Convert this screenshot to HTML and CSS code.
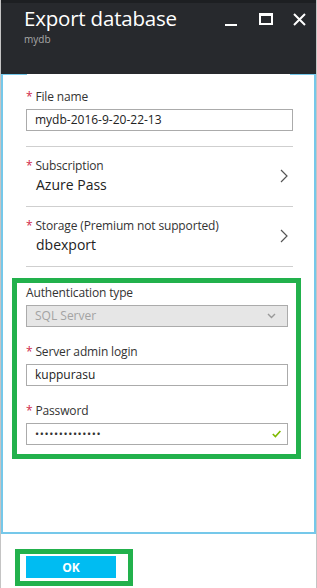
FILE: index.html
```html
<!DOCTYPE html>
<html lang="en">
<head>
  <meta charset="UTF-8">
  <meta name="viewport" content="width=device-width, initial-scale=1.0">
  <title>Export database</title>
  <link rel="stylesheet" href="styles.css">
</head>
<body>
  <div class="blade">
    <header class="blade-header">
      <div class="titles">
        <h1>Export database</h1>
        <p class="subtitle">mydb</p>
      </div>
      <div class="controls">
        <span class="ctl ctl-min"></span>
        <span class="ctl ctl-max"></span>
        <svg class="ctl-close" width="13" height="13" viewBox="0 0 13 13">
          <path d="M1 1 L12 12 M12 1 L1 12" stroke="#fff" stroke-width="2" fill="none"/>
        </svg>
      </div>
    </header>

    <main class="blade-content">
      <div class="field">
        <label><span class="req">*</span> File name</label>
        <div class="input">mydb-2016-9-20-22-13</div>
      </div>

      <div class="picker">
        <div>
          <label><span class="req">*</span> Subscription</label>
          <div class="value">Azure Pass</div>
        </div>
        <svg class="chev" width="8" height="14" viewBox="0 0 8 14">
          <path d="M1 1 L7 7 L1 13" stroke="#555" stroke-width="1.2" fill="none"/>
        </svg>
      </div>

      <div class="picker">
        <div>
          <label><span class="req">*</span> Storage (Premium not supported)</label>
          <div class="value">dbexport</div>
        </div>
        <svg class="chev" width="8" height="14" viewBox="0 0 8 14">
          <path d="M1 1 L7 7 L1 13" stroke="#555" stroke-width="1.2" fill="none"/>
        </svg>
      </div>

      <div class="highlight">
        <div class="field">
          <label>Authentication type</label>
          <div class="input select">
            <span>SQL Server</span>
            <svg width="9" height="6" viewBox="0 0 9 6">
              <path d="M1 1 L4.5 4.5 L8 1" stroke="#999" stroke-width="1.4" fill="none"/>
            </svg>
          </div>
        </div>
        <div class="field">
          <label><span class="req">*</span> Server admin login</label>
          <div class="input">kuppurasu</div>
        </div>
        <div class="field last">
          <label><span class="req">*</span> Password</label>
          <div class="input password">
            <span class="dots">&bull;&bull;&bull;&bull;&bull;&bull;&bull;&bull;&bull;&bull;&bull;&bull;&bull;&bull;</span>
            <svg width="9" height="8" viewBox="0 0 9 8">
              <path d="M0.8 4 L3.4 6.6 L8.4 1" stroke="#7fba00" stroke-width="1.6" fill="none"/>
            </svg>
          </div>
        </div>
      </div>
    </main>

    <footer class="blade-footer">
      <div class="ok-frame">
        <button class="ok">OK</button>
      </div>
    </footer>
  </div>
</body>
</html>
```

FILE: styles.css
```css
/* Reset */
html, body {
  margin: 0;
  padding: 0;
  background: #fff;
  font-family: 'Open Sans', 'Noto Sans', sans-serif;
  color: #333;
}

.blade {
  width: 317px;
  height: 588px;
  box-sizing: border-box;
  border-left: 1px solid #c4c4c4;
  border-right: 1px solid #c4c4c4;
  display: flex;
  flex-direction: column;
  overflow: hidden;
}

/* Header */
.blade-header {
  flex-shrink: 0;
  height: 74px;
  margin: 0 -1px;
  box-sizing: border-box;
  background: #27292d;
  border-top: 3px solid #1d1f22;
  display: flex;
  justify-content: space-between;
  padding: 0 11px 0 24px;
}

.titles h1 {
  margin: 2px 0 0;
  font-size: 20.5px;
  font-weight: 400;
  line-height: 26px;
  color: #fff;
  letter-spacing: -0.2px;
}

.subtitle {
  margin: 1px 0 0;
  font-size: 10px;
  line-height: 14px;
  color: #a8a8a8;
}

.controls {
  display: flex;
  align-items: flex-start;
  padding-top: 10px;
}

.ctl-min {
  width: 12px;
  height: 2px;
  background: #fff;
  margin-top: 11px;
}

.ctl-max {
  width: 10px;
  height: 7px;
  border: 2px solid #fff;
  border-top-width: 3px;
  margin-left: 22px;
}

.ctl-close {
  margin-left: 20px;
}

/* Content */
.blade-content {
  flex-shrink: 0;
  height: 460px;
  box-sizing: border-box;
  border: 2px solid #75c8ea;
  border-top: none;
  background:
    linear-gradient(#75c8ea, #75c8ea) left top / 24px 1px no-repeat,
    linear-gradient(#75c8ea, #75c8ea) right top / 24px 1px no-repeat,
    #fff;
  padding: 15px 21px 0 23px;
}

label {
  display: block;
  font-size: 12px;
  line-height: 16px;
  letter-spacing: -0.15px;
  color: #333;
}

.req {
  color: #d0284a;
}

.field {
  margin-bottom: 4px;
}

.field label {
  margin-bottom: 4px;
}

.input {
  height: 22px;
  box-sizing: border-box;
  border: 1px solid #ababab;
  padding: 0 8px;
  font-size: 12px;
  line-height: 20px;
  color: #222;
  display: flex;
  align-items: center;
  justify-content: space-between;
}

.blade-content > .field {
  border-bottom: 1px solid #cfcfcf;
  padding-bottom: 15px;
  margin-bottom: 0;
}

.picker {
  display: flex;
  justify-content: space-between;
  align-items: center;
  border-bottom: 1px solid #cfcfcf;
  padding: 11px 5px 12px 0;
}

.value {
  font-size: 14px;
  line-height: 18px;
  color: #222;
  margin: 2px 0 0 10px;
}

/* Highlighted section */
.highlight {
  margin: 11px -8px 0 -14px;
  border: 5px solid #22b14c;
  padding: 2px 8px 9px 9px;
}

.highlight .field {
  margin-bottom: 17px;
}

.highlight .field.last {
  margin-bottom: 0;
}

.input.select {
  background: #e6e6e6;
  color: #a3a3a3;
  padding-right: 11px;
}

.input.password {
  padding-right: 6px;
}

.dots {
  font-size: 11px;
  letter-spacing: 0.6px;
  color: #333;
}

/* Footer */
.blade-footer {
  flex-shrink: 0;
  padding: 15px 14px;
}

.ok-frame {
  display: inline-block;
  border: 5px solid #22b14c;
  padding: 2px 12px 3px 6px;
}

.ok {
  display: block;
  width: 90px;
  height: 22px;
  border: none;
  background: #00bcf2;
  color: #fff;
  font-family: 'Open Sans', sans-serif;
  font-size: 12px;
  font-weight: 700;
  padding: 0;
}
```
